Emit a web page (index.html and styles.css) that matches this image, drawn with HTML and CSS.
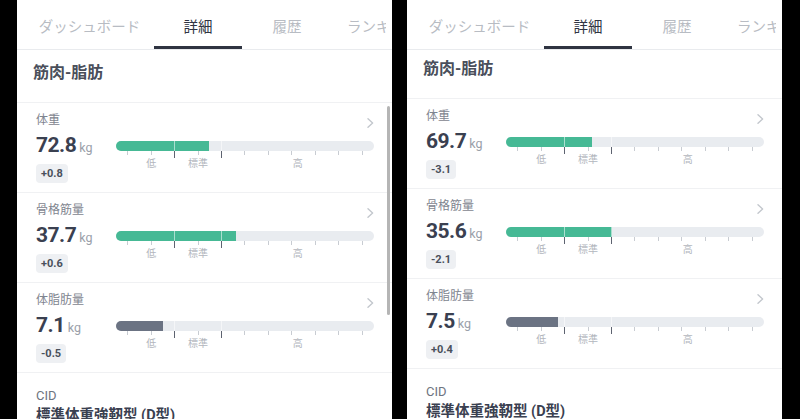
FILE: index.html
```html
<!DOCTYPE html>
<html lang="ja">
<head>
<meta charset="utf-8">
<title>筋肉-脂肪</title>
<link rel="stylesheet" href="styles.css">
</head>
<body>
<div class="screens">
  <section class="phone">
    <nav class="tabs">
      <div class="tab-strip">
        <div class="tab tab-1">ダッシュボード</div>
        <div class="tab tab-2 active">詳細</div>
        <div class="tab tab-3">履歴</div>
        <div class="tab tab-4">ランキング</div>
      </div>
    </nav>
    <div class="viewport">
      <div class="content">
        <h2 class="section-title">筋肉-脂肪</h2>

        <div class="metric">
          <div class="metric-head"><span class="metric-label">体重</span><svg class="chev" viewBox="0 0 7 10" width="7" height="10"><path d="M1 0.8L5.6 5L1 9.2"/></svg></div>
          <div class="metric-body">
            <div class="metric-value">
              <div class="value"><span class="num">72.8</span><span class="unit">kg</span></div>
              <span class="badge">+0.8</span>
            </div>
            <div class="gauge">
              <div class="track"><div class="fill green" style="width:36%"></div><div class="marks"><i></i><i></i><i class="on"></i><i></i><i class="on"></i><i></i><i></i><i></i><i></i><i></i><i></i></div></div>
              <div class="ticks"><i></i><i></i><i class="long"></i><i></i><i class="long"></i><i></i><i></i><i></i><i></i><i></i><i></i></div>
              <div class="scale"><span class="lo">低</span><span class="mid">標準</span><span class="hi">高</span></div>
            </div>
          </div>
        </div>

        <div class="metric">
          <div class="metric-head"><span class="metric-label">骨格筋量</span><svg class="chev" viewBox="0 0 7 10" width="7" height="10"><path d="M1 0.8L5.6 5L1 9.2"/></svg></div>
          <div class="metric-body">
            <div class="metric-value">
              <div class="value"><span class="num">37.7</span><span class="unit">kg</span></div>
              <span class="badge">+0.6</span>
            </div>
            <div class="gauge">
              <div class="track"><div class="fill green" style="width:46.6%"></div><div class="marks"><i></i><i></i><i class="on"></i><i></i><i class="on"></i><i></i><i></i><i></i><i></i><i></i><i></i></div></div>
              <div class="ticks"><i></i><i></i><i class="long"></i><i></i><i class="long"></i><i></i><i></i><i></i><i></i><i></i><i></i></div>
              <div class="scale"><span class="lo">低</span><span class="mid">標準</span><span class="hi">高</span></div>
            </div>
          </div>
        </div>

        <div class="metric">
          <div class="metric-head"><span class="metric-label">体脂肪量</span><svg class="chev" viewBox="0 0 7 10" width="7" height="10"><path d="M1 0.8L5.6 5L1 9.2"/></svg></div>
          <div class="metric-body">
            <div class="metric-value">
              <div class="value"><span class="num">7.1</span><span class="unit">kg</span></div>
              <span class="badge">-0.5</span>
            </div>
            <div class="gauge">
              <div class="track"><div class="fill gray" style="width:18.2%"></div><div class="marks"><i></i><i></i><i class="on"></i><i></i><i class="on"></i><i></i><i></i><i></i><i></i><i></i><i></i></div></div>
              <div class="ticks"><i></i><i></i><i class="long"></i><i></i><i class="long"></i><i></i><i></i><i></i><i></i><i></i><i></i></div>
              <div class="scale"><span class="lo">低</span><span class="mid">標準</span><span class="hi">高</span></div>
            </div>
          </div>
        </div>

        <div class="cid">
          <div class="cid-label">CID</div>
          <div class="cid-name">標準体重強靭型 (D型)</div>
        </div>
      </div>
    </div>
    <div class="scrollbar"></div>
  </section>

  <section class="phone">
    <nav class="tabs">
      <div class="tab-strip">
        <div class="tab tab-1">ダッシュボード</div>
        <div class="tab tab-2 active">詳細</div>
        <div class="tab tab-3">履歴</div>
        <div class="tab tab-4">ランキング</div>
      </div>
    </nav>
    <div class="viewport">
      <div class="content content-scrolled">
        <h2 class="section-title">筋肉-脂肪</h2>

        <div class="metric">
          <div class="metric-head"><span class="metric-label">体重</span><svg class="chev" viewBox="0 0 7 10" width="7" height="10"><path d="M1 0.8L5.6 5L1 9.2"/></svg></div>
          <div class="metric-body">
            <div class="metric-value">
              <div class="value"><span class="num">69.7</span><span class="unit">kg</span></div>
              <span class="badge">-3.1</span>
            </div>
            <div class="gauge">
              <div class="track"><div class="fill green" style="width:33.5%"></div><div class="marks"><i></i><i></i><i class="on"></i><i></i><i class="on"></i><i></i><i></i><i></i><i></i><i></i><i></i></div></div>
              <div class="ticks"><i></i><i></i><i class="long"></i><i></i><i class="long"></i><i></i><i></i><i></i><i></i><i></i><i></i></div>
              <div class="scale"><span class="lo">低</span><span class="mid">標準</span><span class="hi">高</span></div>
            </div>
          </div>
        </div>

        <div class="metric">
          <div class="metric-head"><span class="metric-label">骨格筋量</span><svg class="chev" viewBox="0 0 7 10" width="7" height="10"><path d="M1 0.8L5.6 5L1 9.2"/></svg></div>
          <div class="metric-body">
            <div class="metric-value">
              <div class="value"><span class="num">35.6</span><span class="unit">kg</span></div>
              <span class="badge">-2.1</span>
            </div>
            <div class="gauge">
              <div class="track"><div class="fill green" style="width:41.1%"></div><div class="marks"><i></i><i></i><i class="on"></i><i></i><i class="on"></i><i></i><i></i><i></i><i></i><i></i><i></i></div></div>
              <div class="ticks"><i></i><i></i><i class="long"></i><i></i><i class="long"></i><i></i><i></i><i></i><i></i><i></i><i></i></div>
              <div class="scale"><span class="lo">低</span><span class="mid">標準</span><span class="hi">高</span></div>
            </div>
          </div>
        </div>

        <div class="metric">
          <div class="metric-head"><span class="metric-label">体脂肪量</span><svg class="chev" viewBox="0 0 7 10" width="7" height="10"><path d="M1 0.8L5.6 5L1 9.2"/></svg></div>
          <div class="metric-body">
            <div class="metric-value">
              <div class="value"><span class="num">7.5</span><span class="unit">kg</span></div>
              <span class="badge">+0.4</span>
            </div>
            <div class="gauge">
              <div class="track"><div class="fill gray" style="width:20.3%"></div><div class="marks"><i></i><i></i><i class="on"></i><i></i><i class="on"></i><i></i><i></i><i></i><i></i><i></i><i></i></div></div>
              <div class="ticks"><i></i><i></i><i class="long"></i><i></i><i class="long"></i><i></i><i></i><i></i><i></i><i></i><i></i></div>
              <div class="scale"><span class="lo">低</span><span class="mid">標準</span><span class="hi">高</span></div>
            </div>
          </div>
        </div>

        <div class="cid">
          <div class="cid-label">CID</div>
          <div class="cid-name">標準体重強靭型 (D型)</div>
        </div>
      </div>
    </div>
  </section>
</div>
</body>
</html>
```

FILE: styles.css
```css
* { box-sizing: border-box; }

html, body {
  margin: 0;
  padding: 0;
  background: #000;
}

body {
  font-family: Roboto, "Noto Sans CJK JP", sans-serif;
  color: #3a4050;
}

.screens {
  display: flex;
  gap: 15px;
  padding-left: 17px;
  height: 419px;
  overflow: hidden;
}

.phone {
  position: relative;
  flex: none;
  width: 375px;
  height: 419px;
  background: #fff;
  display: flex;
  flex-direction: column;
  overflow: hidden;
}

/* Tabs */
.tabs {
  flex: none;
  height: 50px;
  border-bottom: 1px solid #e9ebee;
}

.tab-strip {
  display: flex;
  width: 369px;
  height: 49px;
  overflow: hidden;
  white-space: nowrap;
}

.tab {
  flex: none;
  height: 49px;
  padding-top: 17px;
  line-height: 22px;
  font-size: 14.5px;
  text-align: center;
  color: #b8bcc3;
  border-bottom: 3px solid transparent;
}

.tab-1 { width: 137px; padding-left: 8px; }
.tab-2 { width: 88px; }
.tab-3 { width: 90px; }
.tab-4 { padding-left: 15px; text-align: left; }

.tab.active {
  color: #2f3441;
  border-bottom-color: #2f3441;
}

/* Scroll area */
.viewport {
  flex: 1;
  overflow: hidden;
}

.content-scrolled { margin-top: -4px; }

.section-title {
  margin: 0;
  height: 53px;
  padding: 11px 16px 0;
  font-size: 16px;
  line-height: 24px;
  font-weight: 700;
  color: #4a4f5b;
  border-bottom: 1px solid #f0f1f3;
}

.metric {
  height: 90px;
  padding: 8px 18px 0 19px;
  border-bottom: 1px solid #f0f1f3;
}

.metric-head {
  display: flex;
  justify-content: space-between;
  align-items: flex-start;
  height: 18px;
}

.metric-label {
  font-size: 12px;
  line-height: 18px;
  color: #7f858f;
}

.chev {
  margin-top: 7px;
  fill: none;
  stroke: #c3c7cd;
  stroke-width: 1.4;
  stroke-linecap: round;
  stroke-linejoin: round;
}

.metric-body {
  display: flex;
  margin-top: 2px;
}

.metric-value {
  flex: none;
  width: 80px;
  display: flex;
  flex-direction: column;
  align-items: flex-start;
}

.value {
  line-height: 28px;
  white-space: nowrap;
}

.num {
  font-size: 21px;
  font-weight: 700;
  letter-spacing: -0.5px;
  color: #3a4050;
}

.unit {
  margin-left: 3px;
  font-size: 12.5px;
  color: #9aa0a9;
}

.badge {
  margin-top: 2px;
  height: 19px;
  line-height: 19px;
  padding: 0 5px;
  border-radius: 4px;
  background: #eef0f3;
  font-size: 11px;
  font-weight: 700;
  color: #4a505c;
}

/* Gauge */
.gauge {
  flex: 1;
  padding-top: 10px;
}

.track {
  display: grid;
  height: 10px;
  border-radius: 5px;
  background: #e9ecf0;
  overflow: hidden;
}

.fill,
.marks {
  grid-area: 1 / 1;
}

.fill {
  height: 10px;
  justify-self: start;
}

.fill.green { background: #46b995; }
.fill.gray { background: #6b7383; }

.marks {
  display: grid;
  grid-template-columns: repeat(11, 1fr);
}

.marks i {
  display: block;
  justify-self: center;
  width: 1px;
  height: 10px;
}

.marks i.on { background: rgba(255, 255, 255, 0.55); }

.ticks {
  display: grid;
  grid-template-columns: repeat(11, 1fr);
  height: 6px;
  align-items: start;
}

.ticks i {
  display: block;
  justify-self: center;
  width: 1px;
  height: 4px;
  background: #c8ccd2;
}

.ticks i.long {
  height: 7px;
  background: #5d6370;
}

.scale {
  display: grid;
  grid-template-columns: repeat(22, 1fr);
  font-size: 10px;
  line-height: 13px;
  color: #b2b6bd;
  white-space: nowrap;
}

.scale span { text-align: center; }
.scale .lo { grid-column: 3 / 5; }
.scale .mid { grid-column: 7 / 9; }
.scale .hi { grid-column: 15 / 18; }

/* CID */
.cid {
  padding: 13px 19px 0;
}

.cid-label {
  font-size: 13px;
  line-height: 20px;
  color: #6e7480;
}

.cid-name {
  font-size: 14.5px;
  line-height: 20px;
  font-weight: 700;
  color: #3a4050;
}

/* Scroll indicator overlay */
.scrollbar {
  position: absolute;
  top: 106px;
  right: 2px;
  width: 3px;
  height: 209px;
  border-radius: 2px;
  background: #b5b5b5;
}
```
